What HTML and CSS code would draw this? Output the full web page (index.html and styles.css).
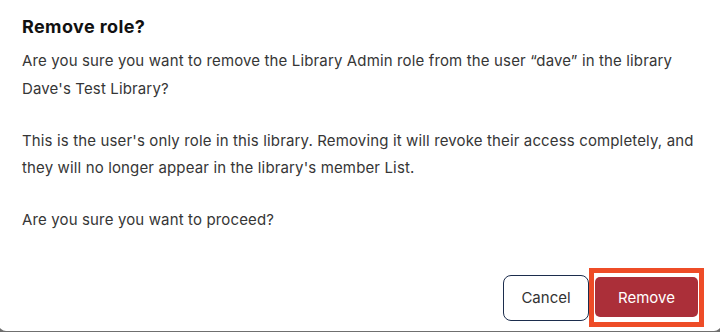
FILE: index.html
```html
<!DOCTYPE html>
<html lang="en">
<head>
    <meta charset="UTF-8">
    <meta name="viewport" content="width=device-width, initial-scale=1.0">
    <title>Remove role?</title>
    <link rel="stylesheet" href="styles.css">
</head>
<body>
    <div class="modal">
        <h2 class="modal-title">Remove role?</h2>
        <div class="modal-body">
            <p>Are you sure you want to remove the Library Admin role from the user “dave” in the library Dave's Test Library?</p>
            <p>This is the user's only role in this library. Removing it will revoke their access completely, and they will no longer appear in the library's member List.</p>
            <p>Are you sure you want to proceed?</p>
        </div>
        <div class="modal-actions">
            <button class="btn btn-outline">Cancel</button>
            <div class="highlight">
                <button class="btn btn-danger">Remove</button>
            </div>
        </div>
    </div>
</body>
</html>
```

FILE: styles.css
```css
* {
    margin: 0;
    padding: 0;
    box-sizing: border-box;
}

html, body {
    height: 332px;
    overflow: hidden;
}

body {
    font-family: Inter, 'Noto Sans', sans-serif;
    background: #6f6f6f;
    color: #333;
}

.modal {
    background: #fff;
    width: 722px;
    height: 335px;
    margin: -4px 0 0 -1px;
    border-radius: 7px;
    padding-top: 18px;
    display: flex;
    flex-direction: column;
}

.modal-title {
    font-size: 18px;
    font-weight: 700;
    letter-spacing: 0.4px;
    color: #111;
    line-height: 26px;
    margin-bottom: 7px;
    padding: 0 23px;
}

.modal-body {
    font-size: 15px;
    letter-spacing: 0.14px;
    line-height: 27.5px;
    color: #363636;
    padding: 0 23px;
}

.modal-body p {
    margin-bottom: 24.5px;
}

.modal-actions {
    margin-top: auto;
    display: flex;
    justify-content: flex-end;
    align-items: center;
    padding: 0 17px 4px 0;
}

.btn {
    font-family: inherit;
    font-size: 15px;
    cursor: pointer;
}

.btn-outline {
    width: 86px;
    height: 46px;
    background: #fff;
    color: #333;
    border: 1px solid #1c2d4d;
    border-radius: 8px;
}

.highlight {
    border: 5px solid #ee4c27;
    padding: 4px 1px 5px 1px;
    background: #fff;
}

.btn-danger {
    display: block;
    width: 103px;
    height: 40px;
    background: #ab2f39;
    color: #fff;
    border: none;
    border-radius: 5px;
}
```
